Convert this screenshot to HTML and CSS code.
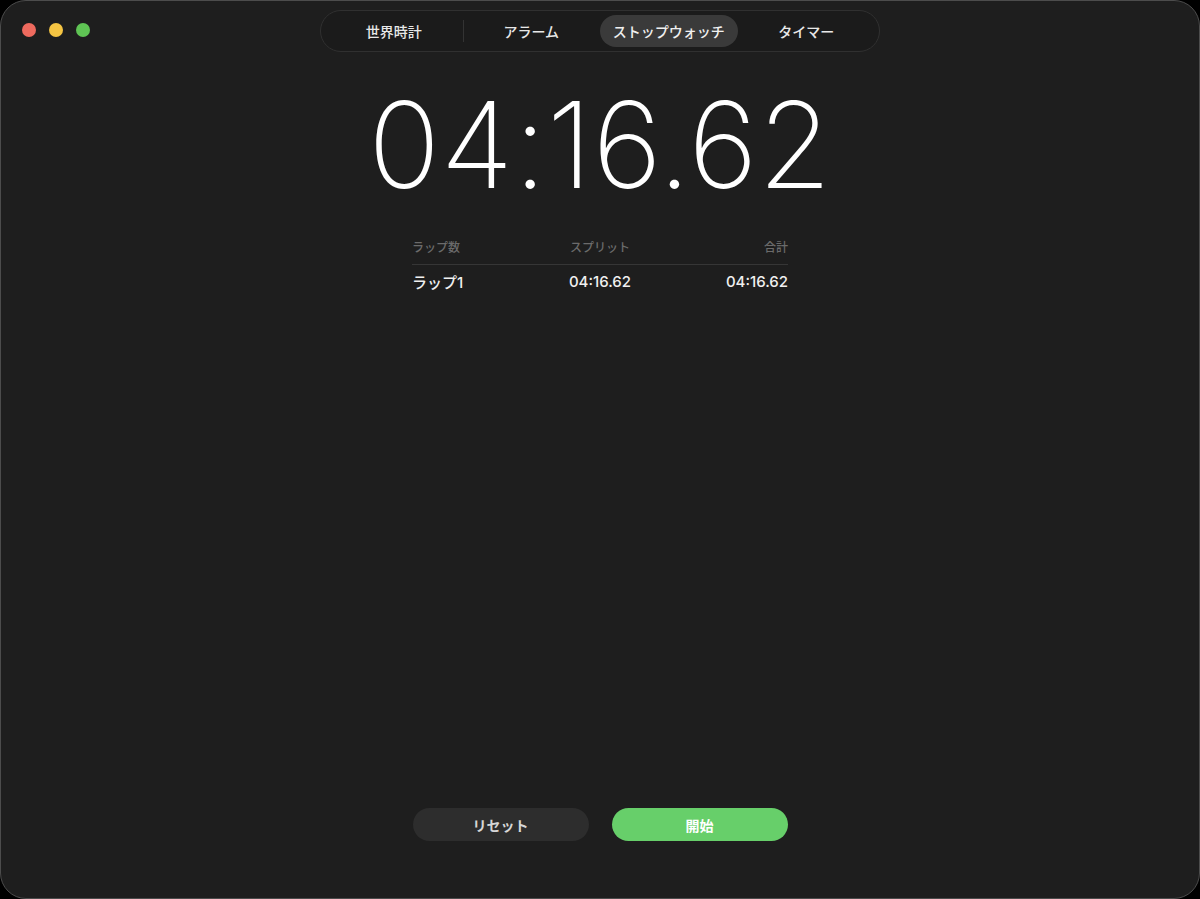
FILE: index.html
```html
<!DOCTYPE html>
<html lang="ja">
<head>
    <meta charset="UTF-8">
    <meta name="viewport" content="width=device-width, initial-scale=1.0">
    <title>時計 - ストップウォッチ</title>
    <link rel="stylesheet" href="styles.css">
</head>
<body>
    <div class="window">
        <div class="traffic-lights">
            <span class="light close"></span>
            <span class="light minimize"></span>
            <span class="light zoom"></span>
        </div>

        <header class="toolbar">
            <nav class="segmented">
                <div class="segment">世界時計</div>
                <div class="segment divider">アラーム</div>
                <div class="segment active">ストップウォッチ</div>
                <div class="segment">タイマー</div>
            </nav>
        </header>

        <main class="stopwatch">
            <div class="time-display">04:16.62</div>

            <table class="lap-table">
                <thead>
                    <tr>
                        <th class="col-lap">ラップ数</th>
                        <th class="col-split">スプリット</th>
                        <th class="col-total">合計</th>
                    </tr>
                </thead>
                <tbody>
                    <tr>
                        <td class="col-lap">ラップ1</td>
                        <td class="col-split">04:16.62</td>
                        <td class="col-total">04:16.62</td>
                    </tr>
                </tbody>
            </table>
        </main>

        <footer class="controls">
            <button class="control-button reset">リセット</button>
            <button class="control-button start">開始</button>
        </footer>
    </div>
</body>
</html>
```

FILE: styles.css
```css
:root {
    --window-bg: #1e1e1e;
    --window-border: #4c4c4c;
    --segment-bg: #1b1b1b;
    --segment-border: #303030;
    --segment-active: #3a3a3a;
    --text-color: #f2f2f2;
    --muted-color: #6b6b6b;
    --rule-color: #363636;
    --reset-bg: #2d2d2d;
    --start-bg: #67cf6a;
}

* {
    margin: 0;
    padding: 0;
    box-sizing: border-box;
}

body {
    background: #000;
    width: 1200px;
    height: 899px;
    overflow: hidden;
    font-family: Inter, "Noto Sans CJK JP", sans-serif;
    color: var(--text-color);
}

.window {
    position: relative;
    width: 1200px;
    height: 899px;
    background: var(--window-bg);
    border: 1px solid var(--window-border);
    border-radius: 26px;
    display: flex;
    flex-direction: column;
    align-items: center;
}

.traffic-lights {
    position: absolute;
    top: 22px;
    left: 21px;
    display: flex;
    gap: 13px;
}

.light {
    width: 14px;
    height: 14px;
    border-radius: 50%;
}

.light.close {
    background: #ee6a5e;
}

.light.minimize {
    background: #f5c543;
}

.light.zoom {
    background: #5fc454;
}

.toolbar {
    margin-top: 9px;
}

.segmented {
    display: flex;
    width: 560px;
    height: 42px;
    padding: 4px;
    background: var(--segment-bg);
    border: 1px solid var(--segment-border);
    border-radius: 21px;
}

.segment {
    position: relative;
    flex: 1;
    display: flex;
    align-items: center;
    justify-content: center;
    border-radius: 16px;
    font-family: "Noto Sans CJK JP", sans-serif;
    font-size: 14px;
    font-weight: 500;
    color: #e8e8e8;
}

.segment.divider::before {
    content: '';
    position: absolute;
    left: 0;
    top: 5px;
    bottom: 5px;
    width: 1px;
    background: #333;
}

.segment.active {
    background: var(--segment-active);
    color: #f0f0f0;
}

.stopwatch {
    display: flex;
    flex-direction: column;
    align-items: center;
}

.time-display {
    margin-top: 24px;
    font-family: Inter, sans-serif;
    font-size: 119px;
    font-weight: 200;
    letter-spacing: 0.3px;
    line-height: 138px;
    color: #fff;
}

.lap-table {
    width: 376px;
    margin-top: 24px;
    border-collapse: collapse;
}

.lap-table th {
    font-family: "Noto Sans CJK JP", sans-serif;
    font-size: 12px;
    font-weight: 500;
    color: var(--muted-color);
    padding-bottom: 9px;
    border-bottom: 1px solid var(--rule-color);
}

.lap-table td {
    font-family: Inter, "Noto Sans CJK JP", sans-serif;
    font-size: 15px;
    font-weight: 500;
    padding-top: 6px;
    color: #f0f0f0;
}

.col-lap {
    text-align: left;
    width: 33%;
}

.col-split {
    text-align: center;
}

.col-total {
    text-align: right;
    width: 33%;
}

.controls {
    margin-top: auto;
    margin-bottom: 57px;
    display: flex;
    gap: 23px;
}

.control-button {
    width: 176px;
    height: 33px;
    border: none;
    border-radius: 17px;
    font-family: "Noto Sans CJK JP", sans-serif;
    font-size: 14px;
    font-weight: 700;
    cursor: pointer;
}

.control-button.reset {
    background: var(--reset-bg);
    color: #d6d6d6;
}

.control-button.start {
    background: var(--start-bg);
    color: #fff;
}
```
